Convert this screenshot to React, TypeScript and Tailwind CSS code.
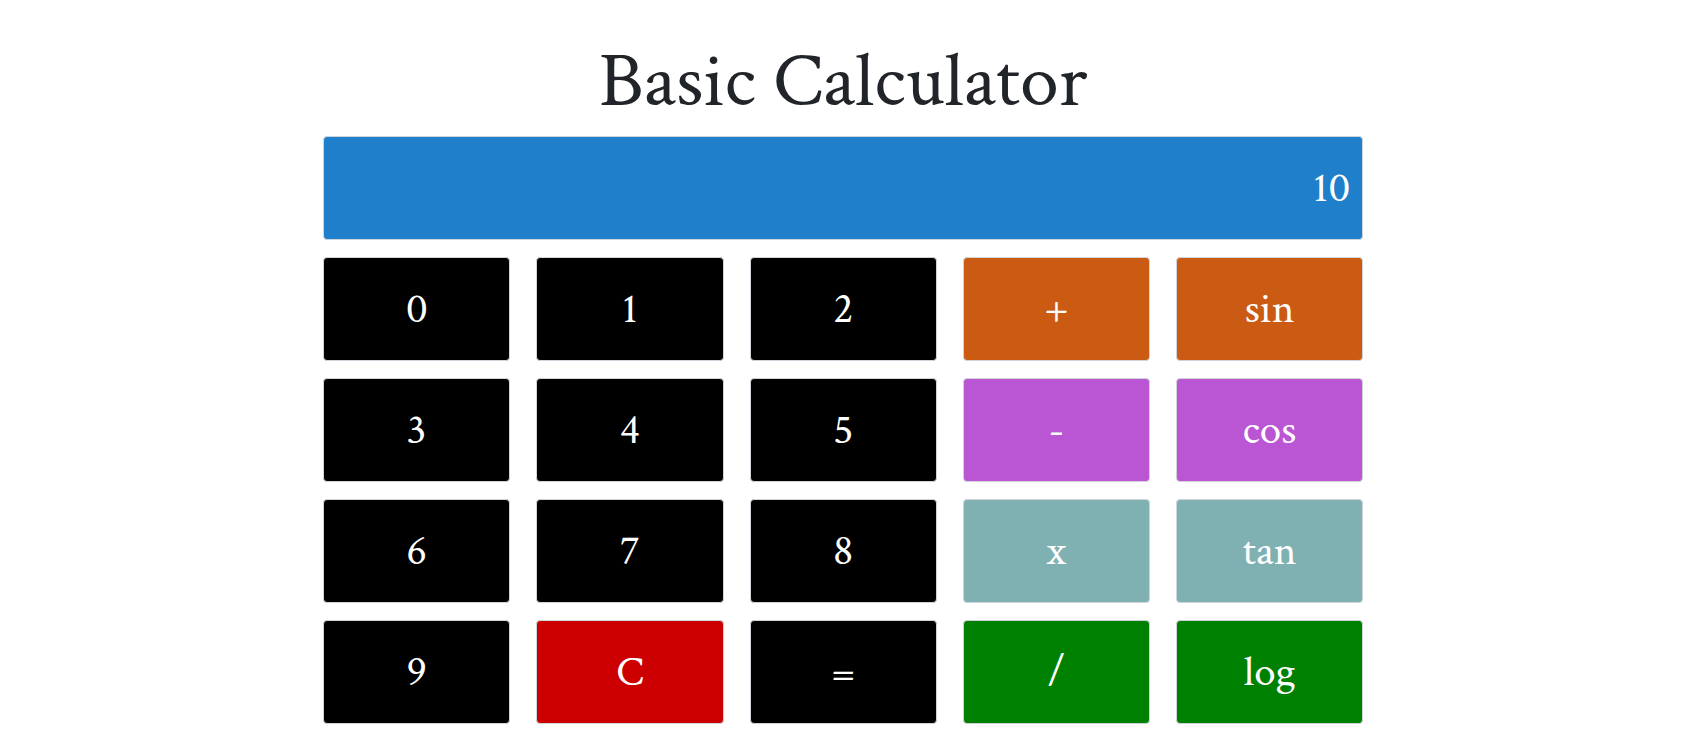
import { useState } from "react";

const keys = [
  { label: "0", color: "bg-black" },
  { label: "1", color: "bg-black" },
  { label: "2", color: "bg-black" },
  { label: "+", color: "bg-[#cb5b12]" },
  { label: "sin", color: "bg-[#cb5b12]" },
  { label: "3", color: "bg-black" },
  { label: "4", color: "bg-black" },
  { label: "5", color: "bg-black" },
  { label: "-", color: "bg-[#ba55d3]" },
  { label: "cos", color: "bg-[#ba55d3]" },
  { label: "6", color: "bg-black" },
  { label: "7", color: "bg-black" },
  { label: "8", color: "bg-black" },
  { label: "x", color: "bg-[#7fb0b2]" },
  { label: "tan", color: "bg-[#7fb0b2]" },
  { label: "9", color: "bg-black" },
  { label: "C", color: "bg-[#cc0000]" },
  { label: "=", color: "bg-black" },
  { label: "/", color: "bg-[#008000]" },
  { label: "log", color: "bg-[#008000]" },
];

const box = "h-[104px] rounded border border-[#ced4da] text-[43px] leading-[60px] text-white";

function calculate(expression: string): string {
  const scientific = expression.match(/^(sin|cos|tan|log)(\d+)$/);
  if (scientific) {
    const n = Number(scientific[2]);
    const name = scientific[1];
    if (name === "sin") return String(Math.sin(n));
    if (name === "cos") return String(Math.cos(n));
    if (name === "tan") return String(Math.tan(n));
    return String(Math.log10(n));
  }
  const binary = expression.match(/^(-?[\d.]+)([-+x/])([\d.]+)$/);
  if (!binary) return expression;
  const a = Number(binary[1]);
  const b = Number(binary[3]);
  if (binary[2] === "+") return String(a + b);
  if (binary[2] === "-") return String(a - b);
  if (binary[2] === "x") return String(a * b);
  return String(a / b);
}

export default function App() {
  const [value, setValue] = useState("10");

  function press(label: string) {
    if (label === "C") setValue("");
    else if (label === "=") setValue(calculate(value));
    else setValue(value + label);
  }

  return (
    <main className="mr-[19%] ml-[19.2%] pt-9 pb-6 font-['Crimson_Text','Liberation_Serif',serif]">
      <h1 className="mb-2 text-center text-[78px] leading-[92px] whitespace-nowrap text-[#212529]">
        Basic Calculator
      </h1>
      <input
        type="text"
        aria-label="Result"
        readOnly
        value={value}
        className={`${box} mb-[17px] block w-full bg-[#1f7fca] px-3 text-right`}
      />
      <div className="grid grid-cols-5 gap-x-[26px] gap-y-[17px]">
        {keys.map((key) => (
          <button
            key={key.label}
            type="button"
            onClick={() => press(key.label)}
            className={`${box} ${key.color}`}
          >
            {key.label}
          </button>
        ))}
      </div>
    </main>
  );
}
